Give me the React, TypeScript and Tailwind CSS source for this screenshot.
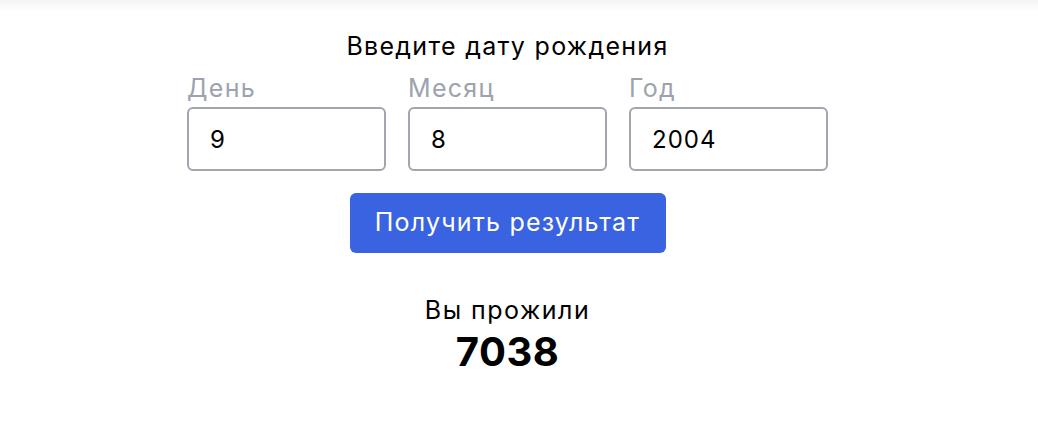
import React from "react";

export default function App() {
  return (
    <div className="min-h-[444px] w-[1038px] bg-white" style={{ fontFamily: "Inter, 'Noto Sans', sans-serif" }}>
      <div className="h-[12px] w-full bg-gradient-to-b from-[#f3f4f6] to-white" />
      <div className="flex w-[1015px] flex-col items-center">
        <div className="mt-[18px] text-[25px] leading-[32px] tracking-[1.3px] text-black">Введите дату рождения</div>
        <div className="mt-[10px] flex gap-[22px]">
          {[
            ["День", "9"],
            ["Месяц", "8"],
            ["Год", "2004"],
          ].map(([label, value]) => (
            <div key={label} className="flex flex-col">
              <div className="text-[25px] leading-[32px] tracking-[1.3px] text-[#9ca3af]">{label}</div>
              <input
                readOnly
                value={value}
                className="mt-[3px] h-[64px] w-[199px] rounded-[6px] border-2 border-[#a1a5af] px-[21px] text-[24px] tracking-[1px] text-black outline-none"
              />
            </div>
          ))}
        </div>
        <button className="mt-[22px] h-[60px] w-[316px] rounded-[6px] bg-[#3a63e2] text-[25px] tracking-[1.2px] text-white">
          Получить результат
        </button>
        <div className="mt-[41px] text-[25px] leading-[32px] tracking-[1.5px] text-black">Вы прожили</div>
        <div className="mt-[2px] text-[40px] font-bold leading-[48px] tracking-[0.5px] text-black">7038</div>
      </div>
    </div>
  );
}
